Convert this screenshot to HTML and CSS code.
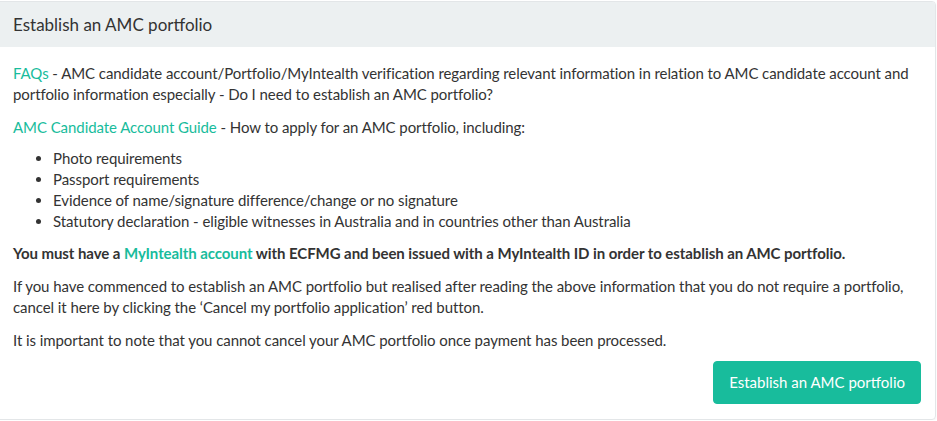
FILE: index.html
```html
<!DOCTYPE html>
<html>
<head>
<meta charset="utf-8">
<link rel="stylesheet" href="styles.css">
</head>
<body>
<div class="card">
  <div class="card-header">Establish an AMC portfolio</div>
  <div class="card-body">
    <p><a href="#">FAQs</a> - AMC candidate account/Portfolio/MyIntealth verification regarding relevant information in relation to AMC candidate account and portfolio information especially - Do I need to establish an AMC portfolio?</p>
    <p class="before-list"><a href="#">AMC Candidate Account Guide</a> - How to apply for an AMC portfolio, including:</p>
    <ul>
      <li>Photo requirements</li>
      <li>Passport requirements</li>
      <li>Evidence of name/signature difference/change or no signature</li>
      <li>Statutory declaration - eligible witnesses in Australia and in countries other than Australia</li>
    </ul>
    <p class="strong">You must have a <a href="#">MyIntealth account</a> with ECFMG and been issued with a MyIntealth ID in order to establish an AMC portfolio.</p>
    <p>If you have commenced to establish an AMC portfolio but realised after reading the above information that you do not require a portfolio, cancel it here by clicking the ‘Cancel my portfolio application’ red button.</p>
    <p class="last">It is important to note that you cannot cancel your AMC portfolio once payment has been processed.</p>
    <div class="actions">
      <button class="btn">Establish an AMC portfolio</button>
    </div>
  </div>
</div>
</body>
</html>
```

FILE: styles.css
```css
html, body {
  margin: 0;
  padding: 0;
  background: #fff;
}
body {
  font-family: Lato, "Open Sans", sans-serif;
  font-size: 15px;
  line-height: 21px;
  color: #333;
  overflow: hidden;
}
.card {
  box-sizing: border-box;
  margin: 1px 0 0 -4px;
  width: 940px;
  border: 1px solid #e3e6e8;
  border-radius: 4px;
  box-shadow: 0 1px 2px rgba(0,0,0,0.05);
  overflow: hidden;
}
.card-header {
  background: #ecf0f1;
  font-size: 17px;
  line-height: 24px;
  padding: 11px 16px 10px;
  color: #333;
}
.card-body {
  padding: 16px 14px 15px 16px;
}
.card-body p,
.card-body li {
  letter-spacing: -0.07px;
}
p {
  margin: 0 0 12px;
}
p.before-list {
  margin-bottom: 10px;
}
p.last {
  margin-bottom: 10px;
}
a {
  color: #18bc9c;
  text-decoration: none;
}
ul {
  margin: 0 0 11px;
  padding-left: 40px;
}
.strong {
  font-weight: bold;
}
.actions {
  display: flex;
  justify-content: flex-end;
}
.btn {
  font-family: Lato, "Open Sans", sans-serif;
  font-size: 15px;
  line-height: 21px;
  padding: 10px 15px;
  background: #18bc9c;
  border: 1px solid #18bc9c;
  border-radius: 4px;
  color: #fff;
  cursor: pointer;
}
```
